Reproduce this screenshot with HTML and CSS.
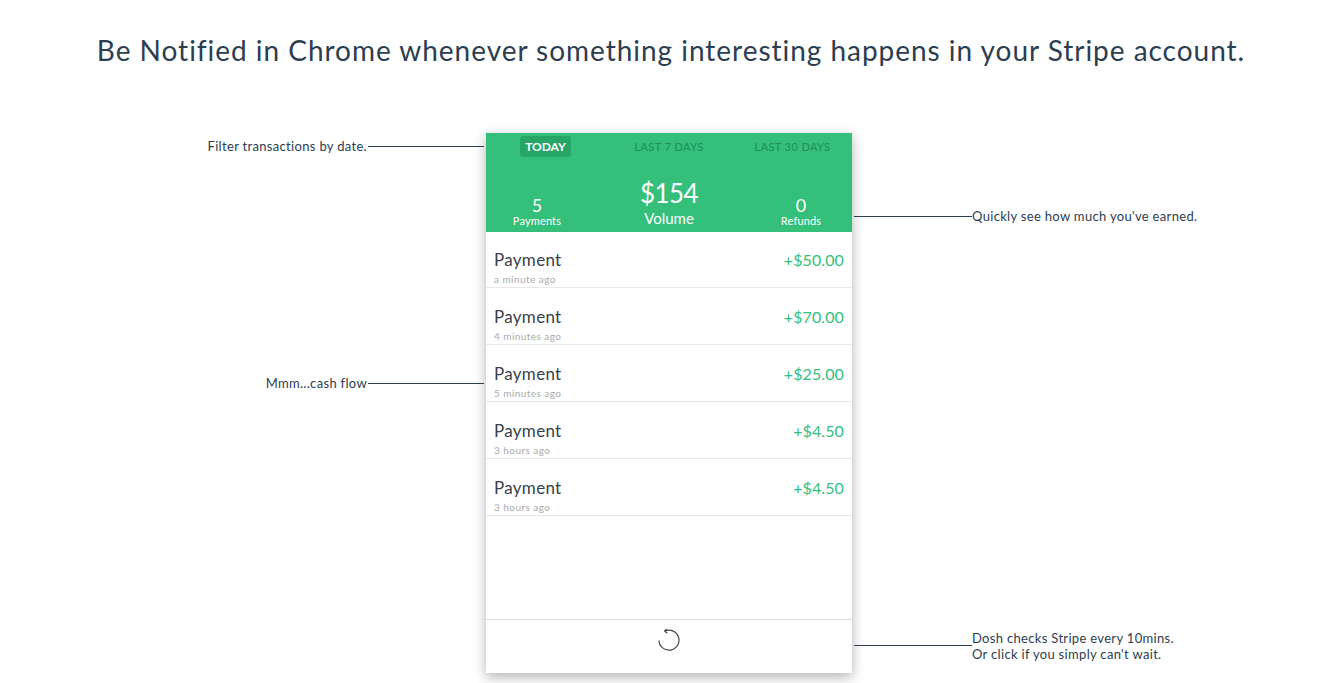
FILE: index.html
```html
<!DOCTYPE html>
<html lang="en">
<head>
  <meta charset="UTF-8" />
  <title>Dosh</title>
  <link rel="stylesheet" href="styles.css">
</head>
<body>

  <h1>Be Notified in Chrome whenever something interesting happens in your Stripe account.</h1>

  <div class="phone">
    <div class="header">
      <div class="tabs">
        <span class="tab active">TODAY</span>
        <span class="tab">LAST 7 DAYS</span>
        <span class="tab">LAST 30 DAYS</span>
      </div>
      <div class="stats">
        <div class="stat"><div class="num">5</div><div class="label">Payments</div></div>
        <div class="stat big"><div class="num">$154</div><div class="label">Volume</div></div>
        <div class="stat"><div class="num">0</div><div class="label">Refunds</div></div>
      </div>
    </div>

    <div class="list">
      <div class="row"><div><div class="title">Payment</div><div class="time">a minute ago</div></div><div class="amount">+$50.00</div></div>
      <div class="row"><div><div class="title">Payment</div><div class="time">4 minutes ago</div></div><div class="amount">+$70.00</div></div>
      <div class="row"><div><div class="title">Payment</div><div class="time">5 minutes ago</div></div><div class="amount">+$25.00</div></div>
      <div class="row"><div><div class="title">Payment</div><div class="time">3 hours ago</div></div><div class="amount">+$4.50</div></div>
      <div class="row"><div><div class="title">Payment</div><div class="time">3 hours ago</div></div><div class="amount">+$4.50</div></div>
    </div>

    <div class="footer">
      <svg width="24" height="24" viewBox="0 0 24 24" fill="none" stroke="#444" stroke-width="1.2">
        <path d="M8 2 A10 10 0 1 1 2 11.5"/>
        <path d="M10 -0.2 L7.6 2 L10.2 4.2"/>
      </svg>
    </div>

    <div class="note left note-filter"><span>Filter transactions by date.</span><i></i></div>
    <div class="note left note-cash"><span>Mmm...cash flow</span><i></i></div>
    <div class="note right note-earned"><i></i><span>Quickly see how much you've earned.</span></div>
    <div class="note right note-refresh"><i></i><span>Dosh checks Stripe every 10mins.<br>Or click if you simply can't wait.</span></div>
  </div>

</body>
</html>
```

FILE: styles.css
```css
body {
  margin: 0;
  height: 683px;
  overflow: hidden;
  background: #fff;
  font-family: Lato, "Open Sans", sans-serif;
  color: #2c3e50;
}
h1 {
  margin: 0;
  padding-top: 32px;
  height: 133px;
  box-sizing: border-box;
  font-size: 28px;
  line-height: 36px;
  font-weight: 400;
  text-align: center;
  letter-spacing: 0.97px;
  color: #2c3e50;
}
.phone {
  position: relative;
  width: 366px;
  height: 540px;
  margin-left: 486px;
  display: flex;
  flex-direction: column;
  background: #fff;
  box-shadow: 0 4px 12px rgba(0, 0, 0, 0.3);
}
.header {
  height: 99px;
  background: #34bf7b;
  color: #fff;
}
.tabs {
  display: grid;
  grid-template-columns: 119px 128px 119px;
  padding-top: 3px;
  justify-items: center;
}
.tab {
  height: 21px;
  line-height: 21px;
  font-size: 11px;
  letter-spacing: 0.4px;
  color: #1f8f5a;
}
.tab.active {
  padding: 0 5px;
  background: #25a566;
  border-radius: 3px;
  color: #fff;
  font-size: 12px;
  font-weight: 700;
  letter-spacing: 0;
}
.stats {
  display: grid;
  grid-template-columns: 102px 1fr 102px;
  align-items: end;
  justify-items: center;
  margin-top: 20px;
  text-align: center;
}
.stat .num {
  font-size: 18px;
  line-height: 20px;
}
.stat .label {
  font-size: 11px;
  line-height: 12px;
  letter-spacing: 0.15px;
  margin-bottom: 5px;
}
.stat.big .num {
  font-size: 26px;
  line-height: 32px;
  letter-spacing: -0.6px;
}
.stat.big .label {
  font-size: 15px;
  line-height: 18px;
  letter-spacing: 0;
  margin-bottom: 5px;
}
.list {
  flex: 1;
  margin-top: -1px;
}
.row {
  height: 57px;
  box-sizing: border-box;
  display: flex;
  justify-content: space-between;
  padding: 19px 8px 0;
  border-bottom: 1px solid #e8e8e8;
}
.title {
  font-size: 17px;
  line-height: 20px;
  letter-spacing: 0.3px;
  color: #3a3f4a;
}
.time {
  margin-top: 3px;
  font-size: 10px;
  line-height: 12px;
  letter-spacing: 0.45px;
  color: #aaa;
}
.amount {
  font-size: 16px;
  line-height: 20px;
  letter-spacing: 0.1px;
  color: #34bf7b;
}
.footer {
  height: 54px;
  box-sizing: border-box;
  border-top: 1px solid #ddd;
  display: flex;
  justify-content: center;
  padding-top: 9px;
}

/* callouts hang off the phone */
.note {
  position: absolute;
  display: flex;
  align-items: center;
  font-size: 13px;
  line-height: 16px;
  letter-spacing: 0.32px;
  white-space: nowrap;
  color: #2c3e50;
}
.note i {
  display: block;
  height: 1px;
  background: #2c3e50;
}
.note.left {
  right: 368px;
}
.note.left i {
  width: 116px;
  margin-left: 1px;
}
.note.right {
  left: 368px;
}
.note.right i {
  width: 118px;
}
.note-filter { top: 5px; }
.note-cash { top: 242px; }
.note-earned { top: 75px; }
.note-refresh { top: 497px; }
.note-refresh i { margin-bottom: 2px; }
```
